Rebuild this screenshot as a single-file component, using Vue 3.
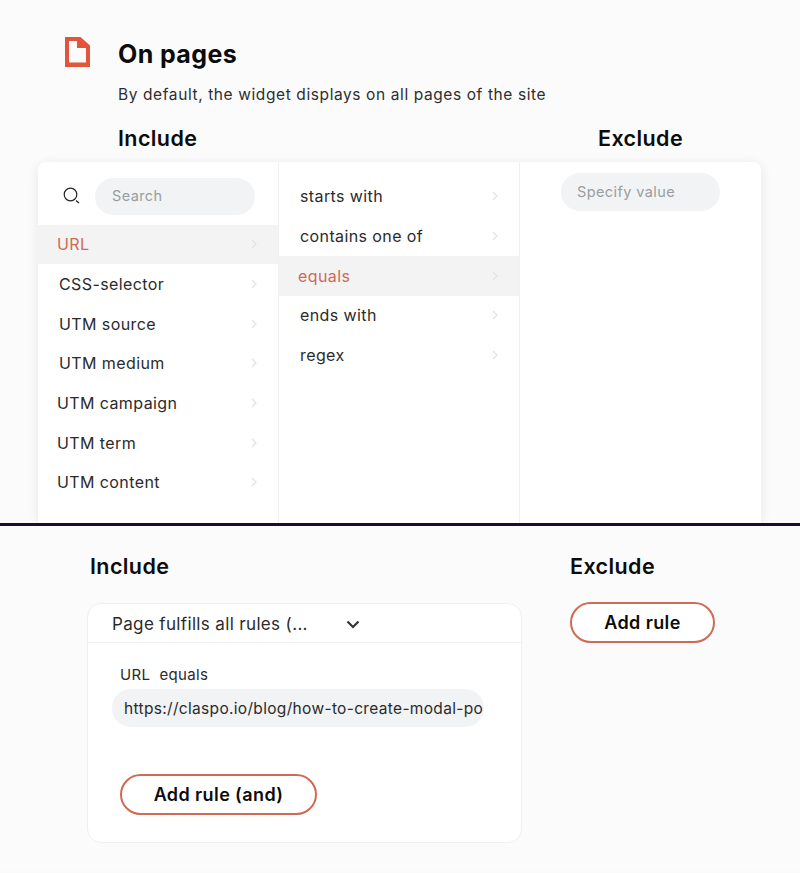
<script setup>
const sources = [
  { label: 'URL', active: true, tight: true },
  { label: 'CSS-selector' },
  { label: 'UTM source' },
  { label: 'UTM medium' },
  { label: 'UTM campaign', tight: true },
  { label: 'UTM term', tight: true },
  { label: 'UTM content', tight: true }
]
const operators = [
  { label: 'starts with' },
  { label: 'contains one of' },
  { label: 'equals', active: true, tight: true },
  { label: 'ends with' },
  { label: 'regex' }
]
</script>

<template>
  <div class="page">
    <section class="top">
      <div class="head">
        <svg class="doc" width="25" height="30" viewBox="0 0 25 30">
          <path d="M0 0H15.500L25 8.500V30H0Z M4 4V25.500H21V11H12V4Z" fill="#e2553c" fill-rule="evenodd" />
        </svg>
        <div>
          <h1>On pages</h1>
          <p class="sub">By default, the widget displays on all pages of the site</p>
        </div>
      </div>
      <div class="tabs">
        <h2>Include</h2>
        <h2>Exclude</h2>
      </div>
      <div class="card">
        <div class="col">
          <div class="search">
            <svg width="20" height="20" viewBox="0 0 20 20" fill="none" stroke="#222" stroke-width="1.200">
              <circle cx="8.500" cy="8.500" r="6.300" />
              <path d="M14 14.500l3 2.500" />
            </svg>
            <div class="pill search-pill">Search</div>
          </div>
          <div v-for="s in sources" :key="s.label" class="row" :class="{ active: s.active, tight: s.tight }">
            <span>{{ s.label }}</span>
            <svg class="chev" width="6" height="10" viewBox="0 0 6 10" fill="none" stroke="#e2e4e6" stroke-width="1.300"><path d="M1 1l4 4-4 4" /></svg>
          </div>
        </div>
        <div class="col col-mid">
          <div v-for="o in operators" :key="o.label" class="row" :class="{ active: o.active, tight: o.tight }">
            <span>{{ o.label }}</span>
            <svg class="chev" width="6" height="10" viewBox="0 0 6 10" fill="none" stroke="#e2e4e6" stroke-width="1.300"><path d="M1 1l4 4-4 4" /></svg>
          </div>
        </div>
        <div class="col col-last">
          <div class="pill value-pill">Specify value</div>
        </div>
      </div>
    </section>
    <section class="bottom">
      <div class="left">
        <h2>Include</h2>
        <div class="box">
          <div class="box-head">
            <span>Page fulfills all rules (...</span>
            <svg width="14" height="9" viewBox="0 0 14 9" fill="none" stroke="#333" stroke-width="2.200"><path d="M1.500 1.500L7 7l5.500-5.500" /></svg>
          </div>
          <div class="box-body">
            <div class="rule-label">URL&nbsp; equals</div>
            <div class="pill url-pill">https://claspo.io/blog/how-to-create-modal-po</div>
            <button class="btn btn-and">Add rule (and)</button>
          </div>
        </div>
      </div>
      <div class="right">
        <h2>Exclude</h2>
        <button class="btn btn-add">Add rule</button>
      </div>
    </section>
  </div>
</template>

<style scoped>
.page {
  width: 800px;
  height: 873px;
  overflow: hidden;
  background: #fafafa;
  font-family: Inter, "Open Sans", sans-serif;
  color: #2b2b2b;
  font-size: 16px;
  letter-spacing: 0.4px;
}
h1, h2, p { margin: 0; }
h1 { font-size: 25px; line-height: 30px; font-weight: 700; color: #0c0c0c; letter-spacing: 0.4px; margin-top: 2px; }
h2 { font-size: 21.500px; line-height: 28px; font-weight: 600; color: #0c0c0c; letter-spacing: 0.4px; }
.top { height: 523px; overflow: hidden; display: flex; flex-direction: column; background: #fbfbfb; }
.head { display: flex; gap: 28px; padding: 37px 0 0 65px; }
.doc { flex: none; }
.sub { margin-top: 16px; line-height: 20px; color: #2e2e2e; font-size: 15.500px; letter-spacing: 0.6px; }
.tabs { display: flex; padding: 19px 0 0 118px; height: 28px; margin-bottom: 10px; }
.tabs h2 { width: 480px; flex: none; }
.card {
  margin: 0 39px 0 38px;
  flex: 1;
  display: flex;
  background: #fff;
  border-radius: 8px 8px 0 0;
  box-shadow: 0 2px 12px rgba(30, 30, 50, 0.09);
}
.col { width: 241px; flex: none; box-sizing: border-box; border-right: 1.500px solid #f1f1f2; }
.col-mid { padding-top: 14.500px; }
.col-last { border-right: 0; padding: 11px 0 0 41px; }
.search { display: flex; align-items: center; gap: 13px; height: 62.500px; padding: 6px 0 0 24px; box-sizing: border-box; }
.pill { background: #f1f3f4; border-radius: 19px; box-sizing: border-box; display: flex; align-items: center; }
.search-pill { width: 160px; height: 37px; padding: 0 0 2px 17px; color: #9a9d9f; font-size: 14.500px; }
.value-pill { width: 159px; height: 38px; padding: 0 0 2px 16px; color: #9a9d9f; font-size: 14.500px; }
.row {
  height: 39.700px;
  display: flex;
  align-items: center;
  justify-content: space-between;
  padding: 0 21px 0 21px;
  box-sizing: border-box;
  font-size: 16px;
}
.row.tight { padding-left: 19px; }
.row.active { background: #f3f3f4; color: #cf6a54; }
.bottom {
  border-top: 3px solid #1f0b2d;
  display: flex;
  height: 347px;
  box-sizing: border-box;
  padding: 26px 0 0 87px;
  background: #fbfbfb;
}
.left { width: 483px; flex: none; }
.left h2 { padding-left: 3px; }
.box {
  width: 435px;
  height: 240px;
  margin-top: 23px;
  box-sizing: border-box;
  background: #fff;
  border: 1.500px solid #efefef;
  border-radius: 14px;
}
.box-head {
  height: 39px;
  box-sizing: border-box;
  border-bottom: 1.500px solid #efefef;
  display: flex;
  align-items: center;
  gap: 37px;
  padding: 2px 0 0 24px;
  font-size: 17px;
  letter-spacing: 0.35px;
}
.box-head span { width: 197px; white-space: nowrap; }
.box-body { padding: 22px 0 0 24px; }
.rule-label { padding-left: 8px; font-size: 15px; line-height: 20px; letter-spacing: 0.35px; }
.url-pill {
  width: 372px;
  height: 38px;
  margin-top: 4px;
  padding-left: 12px;
  white-space: nowrap;
  overflow: hidden;
  font-size: 15.500px;
  letter-spacing: 0.32px;
}
.btn {
  display: block;
  background: #fff;
  border: 2px solid #cf6a54;
  border-radius: 21px;
  height: 41px;
  font: inherit;
  font-weight: 600;
  font-size: 18px;
  letter-spacing: 0.4px;
  color: #0c0c0c;
  padding: 0;
}
.btn-and { width: 197px; margin: 47px 0 0 8px; }
.btn-add { width: 145px; margin-top: 22px; }
</style>
